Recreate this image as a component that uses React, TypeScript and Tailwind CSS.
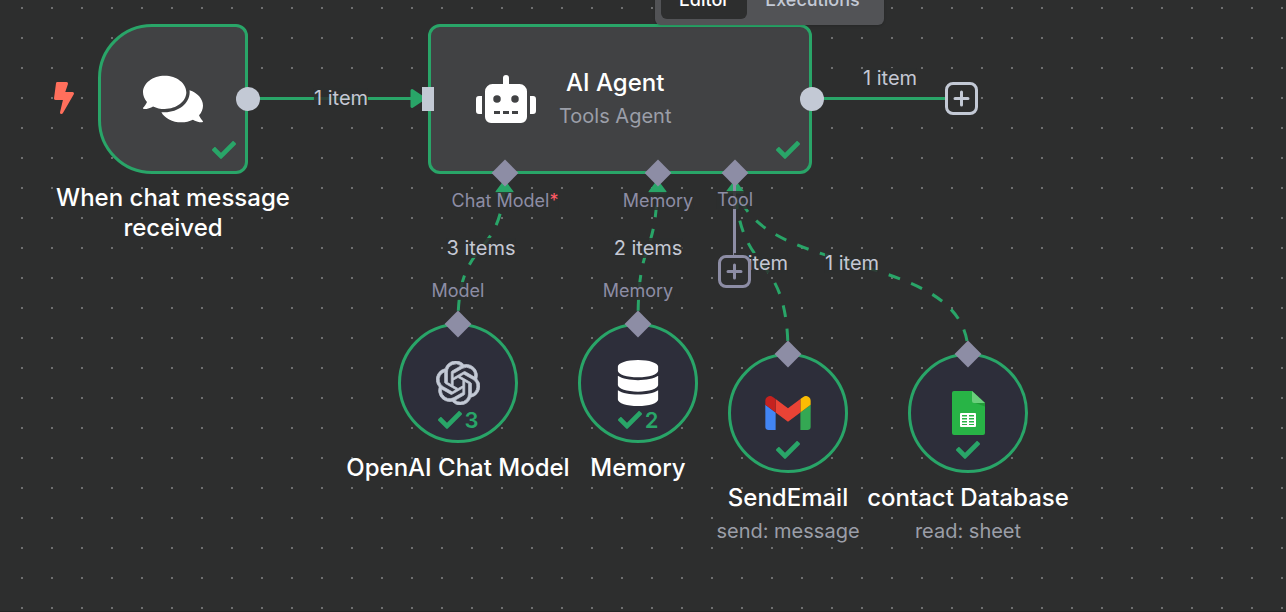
import { FaBolt, FaCheck, FaComments, FaDatabase, FaRobot } from "react-icons/fa";
import { SiOpenai } from "react-icons/si";
import type { ReactNode } from "react";

function Diamond({ className }: { className: string }) {
  return (
    <span className={`absolute h-[19px] w-[19px] -translate-x-1/2 -translate-y-1/2 rotate-45 bg-[#8d8da5] ${className}`} />
  );
}

function PlusButton({ label, className }: { label: string; className: string }) {
  return (
    <button
      aria-label={label}
      className={`absolute flex h-[33px] w-[33px] items-center justify-center rounded-lg border-[3px] bg-[#2d2e2e] ${className}`}
    >
      <svg viewBox="0 0 17 17" className="h-[17px] w-[17px]" stroke="currentColor" strokeWidth="3" strokeLinecap="round">
        <path d="M8.500 2v13M2 8.500h13" />
      </svg>
    </button>
  );
}

function EdgeLabel({ text, className }: { text: string; className: string }) {
  return (
    <span className={`absolute -translate-x-1/2 -translate-y-1/2 bg-[#2d2e2e]/85 text-xl leading-5 whitespace-nowrap text-[#c5c8d4] ${className}`}>
      {text}
    </span>
  );
}

function PortLabel({ children, className }: { children: ReactNode; className: string }) {
  return (
    <span className={`absolute -translate-x-1/2 -translate-y-1/2 bg-[#2d2e2e]/85 text-lg leading-[18px] whitespace-nowrap text-[#8d8da5] ${className}`}>
      {children}
    </span>
  );
}

function ToolNode({
  name,
  detail,
  runs,
  icon,
  className,
}: {
  name: string;
  detail?: string;
  runs?: number;
  icon: ReactNode;
  className: string;
}) {
  return (
    <div className={`absolute flex w-60 -translate-x-1/2 flex-col items-center ${className}`}>
      <div className="relative flex h-[120px] w-[120px] items-center justify-center rounded-full border-[3px] border-[#29a568] bg-[#2d2e3a]">
        <Diamond className="-top-0.5 left-1/2" />
        {icon}
        <div className="absolute inset-x-0 bottom-2 flex h-6 items-center justify-center gap-[3px] text-[22px] leading-6 font-semibold text-[#29a568]">
          <FaCheck size={24} />
          {runs}
        </div>
      </div>
      <h2 className="mt-2.5 text-2xl leading-[30px] font-medium whitespace-nowrap text-white">{name}</h2>
      {detail && <p className="mt-1 text-xl leading-7 text-[#9b9ea8]">{detail}</p>}
    </div>
  );
}

function GmailIcon() {
  return (
    <svg viewBox="52 42 88 66" className="h-[34px] w-[46px]">
      <path fill="#4285f4" d="M58 108h14V74L52 59v43c0 3.32 2.69 6 6 6" />
      <path fill="#34a853" d="M120 108h14c3.32 0 6-2.69 6-6V59l-20 15" />
      <path fill="#fbbc04" d="M120 48v26l20-15v-8c0-7.42-8.47-11.65-14.4-7.2" />
      <path fill="#ea4335" d="M72 74V48l24 18 24-18v26L96 92" />
      <path fill="#c5221f" d="M52 51v8l20 15V48l-5.6-4.2c-5.94-4.45-14.4-.22-14.4 7.2" />
    </svg>
  );
}

function SheetsIcon() {
  return (
    <svg viewBox="0 0 33 44" className="h-[44px] w-[33px]">
      <path fill="#28b446" d="M2 0h18l13 12v30a2 2 0 0 1-2 2H2a2 2 0 0 1-2-2V2a2 2 0 0 1 2-2z" />
      <path fill="#219b38" d="M22 11.500l11 4V12z" />
      <path fill="#6ace7c" d="M20 0l13 12H22a2 2 0 0 1-2-2z" />
      <path fill="#fff" fillRule="evenodd" d="M9 22h14a1 1 0 0 1 1 1v12a1 1 0 0 1-1 1H9a1 1 0 0 1-1-1V23a1 1 0 0 1 1-1zm1 2v1.500h5V24zm7 0v1.500h5V24zm-7 3v1.500h5V27zm7 0v1.500h5V27zm-7 3v1.500h5V30zm7 0v1.500h5V30zm-7 3v1h5v-1zm7 0v1h5v-1z" />
    </svg>
  );
}

export default function App() {
  return (
    <main className="relative h-screen min-h-[612px] overflow-hidden border-b border-[#242525] bg-[#2d2e2e] font-['Inter',sans-serif]">
      <svg className="absolute inset-0 h-full w-full" fill="none" stroke="#29a568" strokeWidth="3">
        <defs>
          <pattern id="dots" x="7" y="-7" width="30" height="30" patternUnits="userSpaceOnUse">
            <rect x="14" y="14" width="2" height="2" fill="#6e6f70" stroke="none" />
          </pattern>
        </defs>
        <rect width="100%" height="100%" fill="url(#dots)" stroke="none" />
        <path d="M248 98.500H415M812 98.500H946" />
        <path d="M412 90.500l12 8-12 8z" fill="#29a568" strokeLinejoin="round" />
        <g strokeDasharray="12 12" strokeDashoffset="12">
          <path d="M458 323C458 230 504.500 266 504.500 173" />
          <path d="M638 323C638 230 657.500 266 657.500 173" />
          <path d="M788 353C788 243 735 283 735 173" />
          <path d="M968 353C968 243 735 283 735 173" />
        </g>
        <path
          d="M504.500 182l7.500 10h-15zM657.500 182l7.500 10h-15zM735 182l7.500 10h-15z"
          fill="#29a568"
          strokeLinejoin="round"
        />
        <path d="M734.500 174v82" stroke="#8d8da5" />
      </svg>

      <FaBolt size={32} className="absolute top-[82px] left-[48px] text-[#ff6f5c]" />

      <section className="absolute top-6 left-[53px] flex w-60 flex-col items-center">
        <div className="relative flex h-[150px] w-[150px] items-center justify-center rounded-l-[54px] rounded-r-xl border-[3px] border-[#29a568] bg-[#414244] text-white">
          <FaComments size={60} />
          <FaCheck size={24} className="absolute right-[9px] bottom-[9px] text-[#29a568]" />
          <span className="absolute top-1/2 -right-[15px] h-6 w-6 -translate-y-1/2 rounded-full bg-[#c3c9d5]" />
        </div>
        <h2 className="mt-[9px] text-center text-2xl leading-[30px] font-medium text-white">When chat message received</h2>
      </section>

      <section className="absolute top-6 left-[428px] flex h-[150px] w-[384px] items-center rounded-xl border-[3px] border-[#29a568] bg-[#414244] pl-[45px] text-white">
        <span className="absolute top-1/2 -left-[9px] h-6 w-3 -translate-y-1/2 bg-[#c3c9d5]" />
        <FaRobot size={60} />
        <div className="ml-[23px] flex flex-col items-center">
          <h2 className="text-2xl leading-[30px] font-medium">AI Agent</h2>
          <p className="mt-1 text-xl leading-7 text-[#9b9ea8]">Tools Agent</p>
        </div>
        <FaCheck size={24} className="absolute right-[9px] bottom-[9px] text-[#29a568]" />
        <span className="absolute top-1/2 -right-[15px] h-6 w-6 -translate-y-1/2 rounded-full bg-[#c3c9d5]" />
      </section>

      <Diamond className="top-[173px] left-[505px]" />
      <Diamond className="top-[173px] left-[658px]" />
      <Diamond className="top-[173px] left-[735px]" />

      <EdgeLabel text="1 item" className="top-[98px] left-[341px]" />
      <EdgeLabel text="1 item" className="top-[78px] left-[890px]" />
      <EdgeLabel text="3 items" className="top-[248px] left-[481px]" />
      <EdgeLabel text="2 items" className="top-[248px] left-[648px]" />
      <EdgeLabel text="1 item" className="top-[263px] left-[761px]" />
      <EdgeLabel text="1 item" className="top-[263px] left-[852px]" />

      <PortLabel className="top-[201px] left-[505px]">
        Chat Model<span className="text-[#ff5a64]">*</span>
      </PortLabel>
      <PortLabel className="top-[201px] left-[658px]">Memory</PortLabel>
      <PortLabel className="top-[200px] left-[735px]">Tool</PortLabel>
      <PortLabel className="top-[291px] left-[458px]">Model</PortLabel>
      <PortLabel className="top-[291px] left-[638px]">Memory</PortLabel>

      <PlusButton label="Add node" className="top-[82px] left-[945px] border-[#c3c9d5] text-[#c3c9d5]" />
      <PlusButton label="Add tool" className="top-[255px] left-[718px] border-[#8d8da5] text-[#8d8da5]" />

      <ToolNode
        name="OpenAI Chat Model"
        runs={3}
        className="top-[323px] left-[458px]"
        icon={<SiOpenai size={44} className="stroke-[#c3c9d5] stroke-[0.4] text-[#c3c9d5]" />}
      />
      <ToolNode name="Memory" runs={2} className="top-[323px] left-[638px]" icon={<FaDatabase size={46} className="text-white" />} />
      <ToolNode name="SendEmail" detail="send: message" className="top-[353px] left-[788px]" icon={<GmailIcon />} />
      <ToolNode name="contact Database" detail="read: sheet" className="top-[353px] left-[968px]" icon={<SheetsIcon />} />

      <nav className="absolute -top-[25px] left-[655px] flex rounded-md bg-[#525356] p-1.5 text-lg leading-[38px] font-medium shadow-sm">
        <button className="rounded-md bg-[#2d2e2e] px-[18px] text-white">Editor</button>
        <button className="px-[18px] text-[#c3c9d5]">Executions</button>
      </nav>
    </main>
  );
}
